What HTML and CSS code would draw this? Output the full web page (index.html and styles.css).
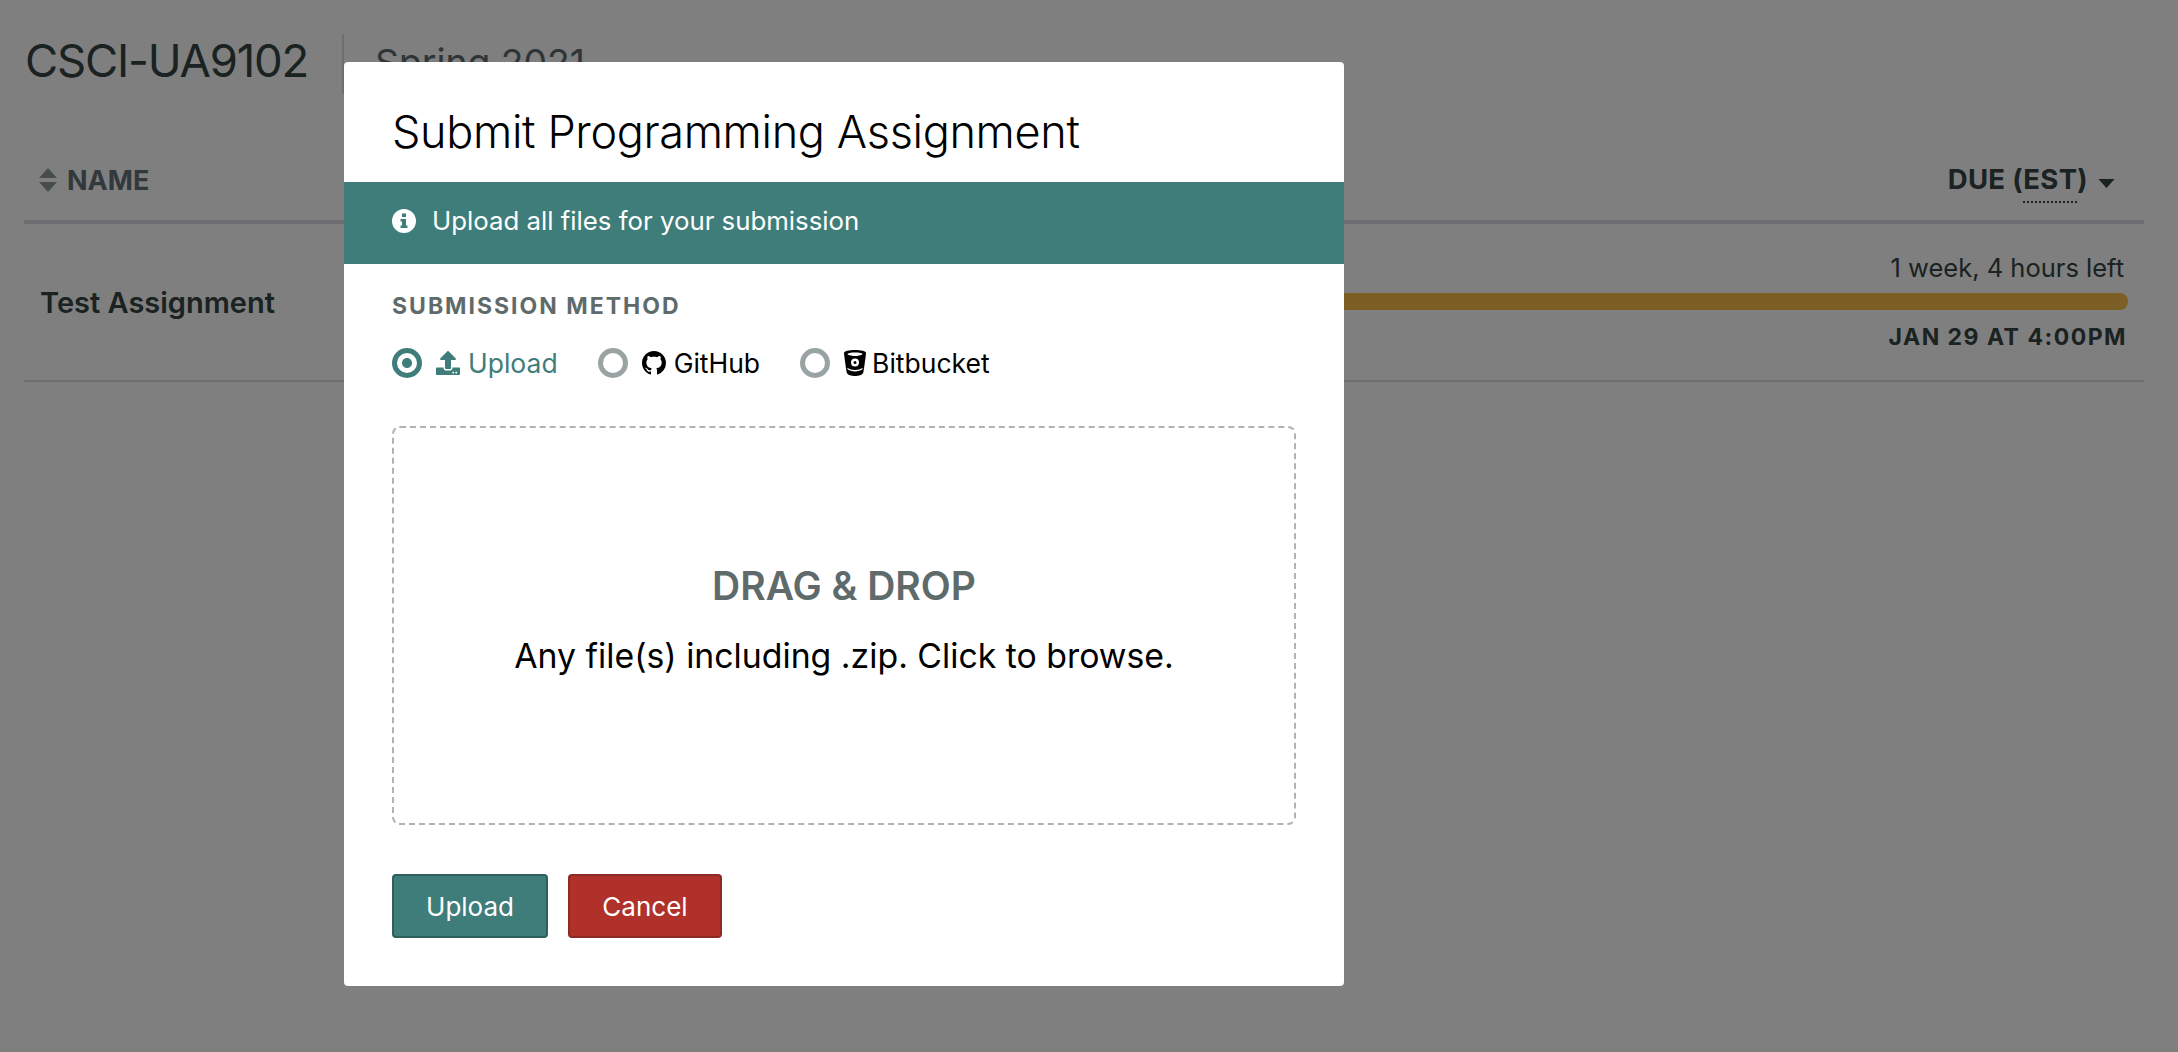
FILE: index.html
```html
<!DOCTYPE html>
<html>
<head>
    <meta charset="utf-8">
    <meta name="viewport" content="width=device-width, initial-scale=1">
    <title>Submit Programming Assignment</title>
    <link rel="stylesheet" href="styles.css">
</head>
<body>
    <div class="page">
        <div class="course-header">
            <h1 class="course-name">CSCI-UA9102</h1>
            <div class="course-term">Spring 2021</div>
        </div>

        <div class="table-head">
            <div class="col-name">
                <svg class="sort-icon" viewBox="0 0 18 24"><path d="M9 0l9 10H0zM9 24L0 14h18z"/></svg>
                <span>NAME</span>
            </div>
            <div class="col-due">
                <span>DUE (<span class="tz-label">EST</span>)</span>
                <svg class="caret-icon" viewBox="0 0 18 10"><path d="M0 0h18l-9 10z"/></svg>
            </div>
        </div>

        <div class="table-row">
            <div class="row-name">Test Assignment</div>
            <div class="row-due">
                <div class="time-left">1 week, 4 hours left</div>
                <div class="time-bar"></div>
                <div class="due-date">JAN 29 AT 4:00PM</div>
            </div>
        </div>
    </div>

    <div class="overlay">
        <div class="modal">
            <h2 class="modal-title">Submit Programming Assignment</h2>

            <div class="banner">
                <svg class="banner-icon" viewBox="0 0 24 24"><path fill-rule="evenodd" d="M12 0a12 12 0 100 24 12 12 0 000-24zM10 4.500h4v3.500h-4zM8.500 10H14v6.500h1.500V19h-7v-2.500H10v-4H8.500z"/></svg>
                <span>Upload all files for your submission</span>
            </div>

            <div class="modal-body">
                <div class="section-label">SUBMISSION METHOD</div>
                <div class="methods">
                    <label class="method method-active">
                        <span class="radio"></span>
                        <svg class="method-icon" viewBox="0 0 512 512"><path d="M296 384h-80c-13.3 0-24-10.7-24-24V192h-87.7c-17.8 0-26.7-21.5-14.1-34.1L242.3 5.7c7.5-7.5 19.8-7.5 27.3 0l152.2 152.2c12.6 12.6 3.7 34.1-14.1 34.1H320v168c0 13.3-10.7 24-24 24zm216-8v112c0 13.3-10.7 24-24 24H24c-13.3 0-24-10.7-24-24V376c0-13.3 10.7-24 24-24h136v8c0 30.9 25.1 56 56 56h80c30.9 0 56-25.1 56-56v-8h136c13.3 0 24 10.7 24 24zm-124 88c0-11-9-20-20-20s-20 9-20 20 9 20 20 20 20-9 20-20zm64 0c0-11-9-20-20-20s-20 9-20 20 9 20 20 20 20-9 20-20z"/></svg>
                        <span>Upload</span>
                    </label>
                    <label class="method">
                        <span class="radio"></span>
                        <svg class="method-icon" viewBox="0 0 16 16"><path d="M8 0C3.58 0 0 3.58 0 8c0 3.54 2.29 6.53 5.47 7.59.4.07.55-.17.55-.38 0-.19-.01-.82-.01-1.49-2.01.37-2.53-.49-2.69-.94-.09-.23-.48-.94-.82-1.13-.28-.15-.68-.52-.01-.53.63-.01 1.08.58 1.23.82.72 1.21 1.87.87 2.33.66.07-.52.28-.87.51-1.07-1.78-.2-3.64-.89-3.64-3.95 0-.87.31-1.59.82-2.15-.08-.2-.36-1.02.08-2.12 0 0 .67-.21 2.2.82.64-.18 1.32-.27 2-.27.68 0 1.36.09 2 .27 1.53-1.04 2.2-.82 2.2-.82.44 1.1.16 1.92.08 2.12.51.56.82 1.27.82 2.15 0 3.07-1.87 3.75-3.65 3.95.29.25.54.73.54 1.48 0 1.07-.01 1.93-.01 2.2 0 .21.15.46.55.38A8.013 8.013 0 0016 8c0-4.42-3.58-8-8-8z"/></svg>
                        <span>GitHub</span>
                    </label>
                    <label class="method">
                        <span class="radio"></span>
                        <svg class="method-icon method-icon-tall" viewBox="0 0 22 26">
                            <path d="M11 0C5 0 0 1 0 3c0 1 1.700 14 2.700 19.500C3.200 25 7.500 26 11 26s7.800-1 8.300-3.500C20.300 17 22 4 22 3c0-2-5-3-11-3z"/>
                            <path fill="#fff" d="M11 2.500c-4 0-7.500.6-7.500 1.500S7 6 11 6s7.500-1.100 7.500-2S15 2.500 11 2.500zM11 8.500a4 4 0 100 8 4 4 0 000-8zm0 2.500a1.500 1.500 0 110 3 1.500 1.500 0 010-3zM3.400 17.800c2 1.500 4.600 2.200 7.600 2.200s5.600-.7 7.600-2.200l-.2 1.500c-2 1.400-4.500 2.100-7.400 2.100s-5.400-.7-7.400-2.100z"/>
                        </svg>
                        <span>Bitbucket</span>
                    </label>
                </div>

                <div class="dropzone">
                    <div class="drop-title">DRAG &amp; DROP</div>
                    <div class="drop-text">Any file(s) including .zip. Click to browse.</div>
                </div>

                <div class="actions">
                    <button class="btn btn-primary">Upload</button>
                    <button class="btn btn-danger">Cancel</button>
                </div>
            </div>
        </div>
    </div>
</body>
</html>
```

FILE: styles.css
```css
* { box-sizing: border-box; margin: 0; padding: 0; }
html, body { height: 100%; overflow: hidden; }
body {
    font-family: 'Inter', 'Liberation Sans', sans-serif;
    background: #fff;
    color: #344444;
    position: relative;
}

/* page behind the modal */
.page { padding: 34px 34px 0 24px; }
.course-header {
    display: flex;
    align-items: center;
    height: 60px;
}
.course-name {
    font-size: 45.500px;
    font-weight: 400;
    letter-spacing: -1.2px;
    width: 320px;
    padding-left: 1px;
    border-right: 2px solid #dadae4;
    line-height: 54px;
    height: 60px;
    color: #344444;
}
.course-term {
    font-size: 37.300px;
    margin: -4px 0 0 31px;
    color: #5c6b70;
}
.table-head {
    display: flex;
    justify-content: space-between;
    align-items: center;
    height: 70px;
    margin-top: 60px;
    padding: 0 29px 0 15px;
    border-bottom: 4px solid #dadae4;
}
.col-name {
    display: flex;
    align-items: center;
    gap: 10px;
    font-size: 27px;
    font-weight: 700;
    margin-top: -14px;
    color: #647279;
}
.sort-icon { width: 18px; height: 24px; fill: #8f9a9e; }
.col-due {
    font-size: 27.500px;
    font-weight: 700;
    letter-spacing: 0.300px;
    color: #344444;
    display: flex;
    align-items: center;
    gap: 10px;
    margin-top: -16px;
}
.tz-label { border-bottom: 2px dotted #344444; padding-bottom: 5px; }
.caret-icon { width: 17px; height: 9px; fill: #344444; margin-top: 8px; }
.table-row {
    display: flex;
    justify-content: space-between;
    align-items: center;
    height: 158px;
    padding: 0 16px;
    border-bottom: 2px solid #dadae4;
}
.row-name {
    font-size: 29px;
    font-weight: 600;
    color: #344444;
}
.row-due {
    width: 1000px;
    text-align: right;
    padding-bottom: 3px;
}
.time-left { font-size: 25.500px; line-height: 34px; padding-right: 4px; }
.time-bar {
    height: 17px;
    margin: 8px 0 13px;
    background: #f6be48;
    border-radius: 8px;
}
.due-date { font-size: 23px; font-weight: 700; letter-spacing: 1.5px; line-height: 28px; padding-right: 1px; }

/* modal */
.overlay {
    position: absolute;
    top: 0;
    left: 0;
    right: 0;
    bottom: 0;
    background: rgba(0, 0, 0, 0.5);
    padding: 62px 0 0 344px;
}
.modal {
    width: 1000px;
    height: 924px;
    background: #fff;
    border-radius: 4px;
    color: #000;
}
.modal-title {
    height: 120px;
    padding: 0 48px;
    font-size: 45px;
    font-weight: 300;
    line-height: 140px;
    letter-spacing: -0.350px;
    overflow: hidden;
}
.banner {
    display: flex;
    align-items: center;
    gap: 16px;
    height: 82px;
    padding: 0 48px 5px;
    background: #3e7d7a;
    color: #fff;
    font-size: 25.800px;
}
.banner-icon { width: 24px; height: 24px; fill: #fff; }
.modal-body { padding: 0 48px; }
.section-label {
    margin-top: 29px;
    font-size: 23px;
    font-weight: 700;
    line-height: 26px;
    letter-spacing: 2px;
    color: #5f6b6b;
}
.methods {
    display: flex;
    gap: 40px;
    margin-top: 29px;
    height: 30px;
}
.method {
    display: flex;
    align-items: center;
    font-size: 26.500px;
}
.method-active { color: #3e7d7a; }
.radio {
    width: 30px;
    height: 30px;
    margin-right: 14px;
    border: 5px solid #9aa3a3;
    border-radius: 50%;
}
.method-active .radio {
    border-color: #3e7d7a;
    background: radial-gradient(circle, #3e7d7a 0, #3e7d7a 4.500px, #fff 5.500px);
}
.method-icon {
    width: 24px;
    height: 24px;
    margin-right: 8px;
    fill: currentColor;
}
.method-icon-tall { width: 22px; height: 26px; margin-right: 6px; }
.dropzone {
    display: flex;
    flex-direction: column;
    align-items: center;
    justify-content: center;
    height: 399px;
    margin-top: 48px;
    border: 2px dashed #aeb3b3;
    border-radius: 8px;
    padding-bottom: 14px;
}
.drop-title {
    font-size: 39px;
    font-weight: 600;
    color: #5f6b6b;
}
.drop-text {
    margin-top: 26px;
    font-size: 33.800px;
    color: #000;
}
.actions {
    display: flex;
    gap: 20px;
    margin-top: 49px;
}
.btn {
    height: 64px;
    border-radius: 4px;
    border: 2px solid;
    color: #fff;
    font-family: inherit;
    font-size: 26px;
}
.btn-primary { width: 156px; background: #3e7d7a; border-color: #2f5f5b; }
.btn-danger { width: 154px; background: #b03129; border-color: #8c2a26; }
```
